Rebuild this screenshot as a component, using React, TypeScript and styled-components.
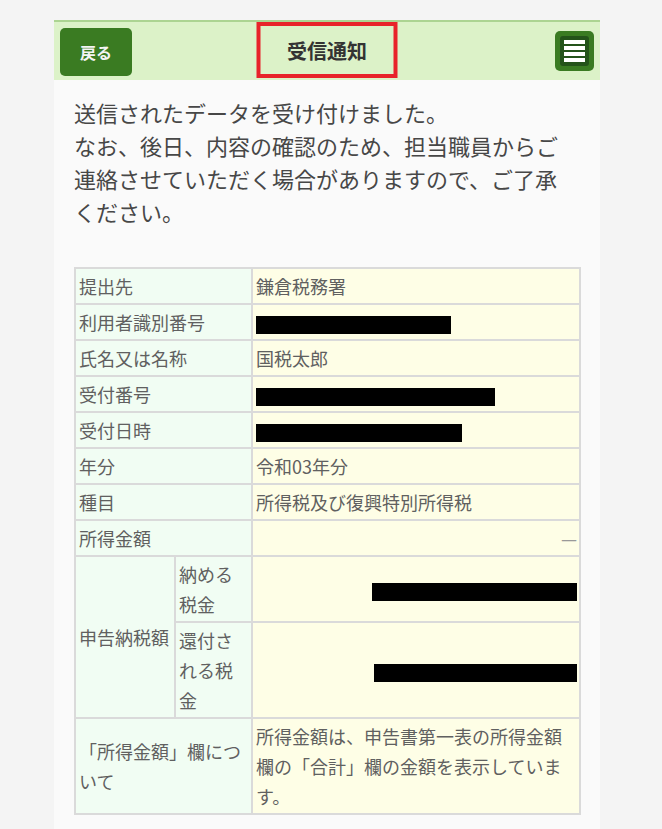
import React from 'react'
import styled, { createGlobalStyle } from 'styled-components'

const Global = createGlobalStyle`
  html, body {
    margin: 0;
    padding: 0;
    background: #f4f4f4;
  }
  body {
    font-family: "Noto Sans CJK JP", "Noto Sans", sans-serif;
  }
`

const Page = styled.div`
  width: 546px;
  min-height: 809px;
  margin: 20px 0 0 54px;
  background: #fafafa;
`

const Header = styled.header`
  height: 58px;
  border-top: 2px solid #acd492;
  background: #dcf2c8;
  display: flex;
  align-items: center;
  justify-content: space-between;
  padding: 0 6px;
  position: relative;
`

const BackButton = styled.button`
  width: 72px;
  height: 48px;
  margin-top: 2px;
  border: 0;
  border-radius: 5px;
  background: #3a7b22;
  color: #f4f4f4;
  font-family: inherit;
  font-size: 16px;
  font-weight: 700;
  cursor: pointer;
`

const Title = styled.h1`
  position: absolute;
  left: 50%;
  top: 0;
  transform: translateX(-50%);
  margin: 0;
  width: 133px;
  height: 48px;
  border: 4px solid #e8232a;
  display: flex;
  align-items: center;
  justify-content: center;
  font-size: 20px;
  font-weight: 700;
  color: #333;
`

const MenuButton = styled.button`
  width: 39px;
  height: 40px;
  padding: 0;
  border: 0;
  border-radius: 5px;
  background: #3a7b22;
  display: flex;
  align-items: center;
  justify-content: center;
  cursor: pointer;
`

const Body = styled.main`
  padding: 16px 21px 20px 20px;
`

const Intro = styled.p`
  margin: 0 0 39px;
  font-size: 22px;
  line-height: 33px;
  color: #474747;
`

const Table = styled.table`
  width: 505px;
  table-layout: fixed;
  border-collapse: collapse;
  font-size: 18px;
  line-height: 30px;
  color: #606060;
`

const Label = styled.th`
  background: #f1fdf3;
  border: 2px solid #dadada;
  padding: 2px 3px;
  font-weight: 400;
  text-align: left;
  vertical-align: middle;
  word-break: break-all;
`

const Value = styled.td<{ $right?: boolean }>`
  background: #fefee6;
  border: 2px solid #dadada;
  padding: 2px 2px 2px 3px;
  text-align: ${p => (p.$right ? 'right' : 'left')};
  vertical-align: middle;
  word-break: break-all;
`

const Redact = styled.span<{ $w: number }>`
  display: inline-block;
  width: ${p => p.$w}px;
  height: 18px;
  background: #000;
  vertical-align: middle;
`

const Dash = styled.span`
  color: #999;
`

const HamburgerIcon = () => (
  <svg width="29" height="30" viewBox="0 0 29 30">
    <rect x="0" y="0" width="29" height="30" rx="3" fill="#24531a" />
    <rect x="4" y="4" width="21" height="4" fill="#fff" />
    <rect x="4" y="10" width="21" height="4" fill="#fff" />
    <rect x="4" y="16" width="21" height="4" fill="#fff" />
    <rect x="4" y="22" width="21" height="4" fill="#fff" />
  </svg>
)

type Row = { label: string; value: React.ReactNode; right?: boolean }

const rows: Row[] = [
  { label: '提出先', value: '鎌倉税務署' },
  { label: '利用者識別番号', value: <Redact $w={195} /> },
  { label: '氏名又は名称', value: '国税太郎' },
  { label: '受付番号', value: <Redact $w={239} /> },
  { label: '受付日時', value: <Redact $w={206} /> },
  { label: '年分', value: '令和03年分' },
  { label: '種目', value: '所得税及び復興特別所得税' },
  { label: '所得金額', value: <Dash>—</Dash>, right: true },
]

const App = () => (
  <>
    <Global />
    <Page>
      <Header>
        <BackButton>戻る</BackButton>
        <Title>受信通知</Title>
        <MenuButton aria-label="メニュー">
          <HamburgerIcon />
        </MenuButton>
      </Header>
      <Body>
        <Intro>
          送信されたデータを受け付けました。
          <br />
          なお、後日、内容の確認のため、担当職員からご連絡させていただく場合がありますので、ご了承ください。
        </Intro>
        <Table>
          <colgroup>
            <col style={{ width: 100 }} />
            <col style={{ width: 77 }} />
            <col style={{ width: 328 }} />
          </colgroup>
          <tbody>
            {rows.map(r => (
              <tr key={r.label}>
                <Label colSpan={2}>{r.label}</Label>
                <Value $right={r.right}>{r.value}</Value>
              </tr>
            ))}
            <tr>
              <Label rowSpan={2}>申告納税額</Label>
              <Label>納める税金</Label>
              <Value $right>
                <Redact $w={205} />
              </Value>
            </tr>
            <tr>
              <Label>還付される税金</Label>
              <Value $right>
                <Redact $w={203} />
              </Value>
            </tr>
            <tr>
              <Label colSpan={2}>「所得金額」欄について</Label>
              <Value>所得金額は、申告書第一表の所得金額欄の「合計」欄の金額を表示しています。</Value>
            </tr>
          </tbody>
        </Table>
      </Body>
    </Page>
  </>
)

export default App
